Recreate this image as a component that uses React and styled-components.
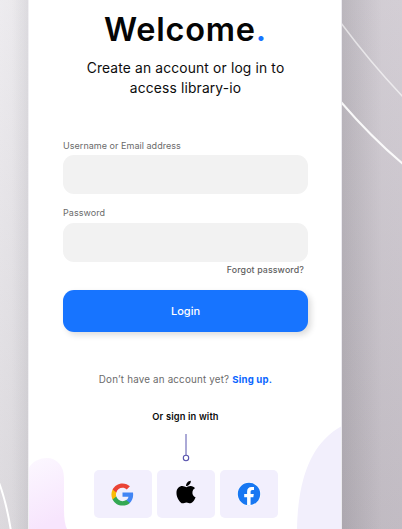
import React from "react";
import styled, { createGlobalStyle } from "styled-components";
import { FaApple } from "react-icons/fa";

const GlobalStyle = createGlobalStyle`
  *, *::before, *::after { box-sizing: border-box; }
  body { margin: 0; overflow: hidden; }
  h1, p { margin: 0; }
  button, input { font: inherit; border: 0; padding: 0; }
`;

const Page = styled.main`
  position: relative;
  width: 402px;
  height: 529px;
  padding-left: 28px;
  overflow: hidden;
  font-family: Inter, "Open Sans", sans-serif;
  background:
    linear-gradient(90deg, transparent 342px, rgba(90, 85, 95, 0.18) 342px, transparent 382px),
    linear-gradient(90deg, transparent 12px, rgba(110, 110, 120, 0.1) 28px, transparent 28px),
    linear-gradient(180deg, rgba(255, 255, 255, 0.12), rgba(110, 104, 110, 0.12)),
    linear-gradient(90deg, #ebe9ed 0, #e6e4e8 28px, #cac5cc 342px, #cdc7cf 402px);
`;

const Curves = styled.svg`
  position: absolute;
  inset: 0;
`;

const Card = styled.section`
  position: relative;
  width: 314px;
  height: 529px;
  padding: 8px 33px 0 34px;
  display: flex;
  flex-direction: column;
  overflow: hidden;
  background: #fff;
  border-left: 1px solid #f1f0f3;
  border-right: 1px solid #ecebf0;
`;

const Blobs = styled.svg`
  position: absolute;
  left: -1px;
  bottom: 0;
`;

const Content = styled.div`
  position: relative;
  display: flex;
  flex-direction: column;
`;

const Title = styled.h1`
  height: 44px;
  line-height: 44px;
  font-size: 32.5px;
  font-weight: 600;
  letter-spacing: 0.75px;
  text-align: center;
  white-space: nowrap;
  color: #050505;
  span { color: #1774ff; }
`;

const Intro = styled.p`
  margin-top: 6px;
  line-height: 20px;
  font-size: 13.8px;
  letter-spacing: 0.16px;
  text-align: center;
  white-space: nowrap;
  color: #0c0c0c;
`;

const Field = styled.label`
  display: flex;
  flex-direction: column;
  height: 56px;
  margin-top: ${({ $top }) => $top}px;
`;

const LabelText = styled.span`
  height: ${({ $h }) => $h}px;
  line-height: 14px;
  font-size: 9px;
  letter-spacing: 0.04px;
  color: #6b6b6b;
`;

const Input = styled.input`
  width: 245px;
  height: 39px;
  border-radius: 11px;
  background: #f2f2f2;
  outline: none;
`;

const Forgot = styled.a`
  align-self: flex-end;
  margin: 1px 4px 0 0;
  height: 14px;
  line-height: 14px;
  font-size: 8.8px;
  letter-spacing: 0.12px;
  font-weight: 500;
  white-space: nowrap;
  color: #5f5f5f;
`;

const LoginButton = styled.button`
  width: 245px;
  height: 42px;
  margin-top: 13px;
  border-radius: 11px;
  background: #1774ff;
  color: #fff;
  font-size: 11px;
  font-weight: 500;
  box-shadow: 3px 3px 6px rgba(0, 0, 0, 0.14);
`;

const Signup = styled.p`
  margin-top: 41px;
  height: 14px;
  line-height: 14px;
  font-size: 9.8px;
  letter-spacing: 0.19px;
  text-align: center;
  white-space: nowrap;
  color: #6b6b6b;
  a { color: #0b66ff; font-weight: 700; font-size: 9.6px; }
`;

const OrText = styled.p`
  margin-top: 23px;
  height: 14px;
  line-height: 14px;
  font-size: 9.3px;
  letter-spacing: 0.14px;
  font-weight: 600;
  text-align: center;
  color: #0a0a0a;
`;

const Pin = styled.svg`
  align-self: center;
  margin-top: 10px;
  display: block;
`;

const Providers = styled.div`
  display: grid;
  grid-template-columns: repeat(3, 58px);
  column-gap: 5px;
  justify-content: center;
  margin-top: 8px;
`;

const Provider = styled.button`
  height: 48px;
  border-radius: 5px;
  background: #f2effd;
  display: flex;
  align-items: center;
  justify-content: center;
  color: #000;
  svg { display: block; }
`;

const AppleIcon = styled(FaApple)`
  margin-bottom: 5px;
`;

function GoogleIcon() {
  return (
    <svg width="23" height="23" viewBox="0.6 0.6 22.8 22.8">
      <path fill="#4285F4" d="M22.56 12.25c0-.78-.07-1.53-.2-2.25H12v4.26h5.92c-.26 1.37-1.04 2.53-2.21 3.31v2.77h3.57c2.08-1.92 3.28-4.74 3.28-8.09z" />
      <path fill="#34A853" d="M12 23c2.97 0 5.46-.98 7.28-2.66l-3.57-2.77c-.98.66-2.23 1.06-3.71 1.06-2.86 0-5.29-1.93-6.16-4.53H2.18v2.84C3.99 20.53 7.7 23 12 23z" />
      <path fill="#FBBC05" d="M5.84 14.09c-.22-.66-.35-1.36-.35-2.09s.13-1.43.35-2.09V7.07H2.18C1.43 8.55 1 10.22 1 12s.43 3.45 1.18 4.93z" />
      <path fill="#EA4335" d="M12 5.38c1.62 0 3.06.56 4.21 1.64l3.15-3.15C17.45 2.09 14.97 1 12 1 7.7 1 3.99 3.47 2.18 7.07l3.66 2.84c.87-2.6 3.3-4.53 6.16-4.53z" />
    </svg>
  );
}

function FacebookIcon() {
  return (
    <svg width="24" height="24" viewBox="0 0 24 24">
      <circle cx="12" cy="12" r="11.8" fill="#fff" />
      <circle cx="12" cy="12" r="11.2" fill="#1877f2" />
      <path fill="#fff" d="M10.1 23.2v-8H7.2v-3.3h2.9V9.4c0-2.9 1.7-4.5 4.3-4.5 1.3 0 2.6.2 2.6.2V8h-1.5c-1.4 0-1.9.9-1.9 1.8v2.1h3.2l-.5 3.3h-2.7v8z" />
    </svg>
  );
}

export default function App() {
  return (
    <>
      <GlobalStyle />
      <Page>
        <Curves width="402" height="529" fill="none" stroke="#fff">
          <path d="M341 23Q370 62 403 97" strokeWidth="1.5" opacity=".6" />
          <path d="M341 102Q371 137 403 164" strokeWidth="2" opacity=".9" />
          <path d="M-2 480Q6 500 11 531" strokeWidth="2" />
        </Curves>
        <Card>
          <Blobs width="314" height="110" viewBox="28 419 314 110">
            <defs>
              <linearGradient id="lilac" x1="0" y1="0" x2=".25" y2="1">
                <stop stopColor="#fcf8ff" />
                <stop offset="1" stopColor="#f7e5fd" />
              </linearGradient>
            </defs>
            <path fill="url(#lilac)" d="M28 470C31 462 39 458 47 458C57 458 64 466 64 478V510Q64 523 67 529H28Z" />
            <path fill="#f2effc" d="M342 426C316 440 298 470 297 529H342Z" />
          </Blobs>
          <Content>
            <Title>Welcome<span>.</span></Title>
            <Intro>Create an account or log in to<br />access library-io</Intro>
            <Field $top={41}>
              <LabelText $h={16}>Username or Email address</LabelText>
              <Input type="text" />
            </Field>
            <Field $top={11}>
              <LabelText $h={16.5}>Password</LabelText>
              <Input type="password" />
            </Field>
            <Forgot>Forgot password?</Forgot>
            <LoginButton>Login</LoginButton>
            <Signup>Don’t have an account yet? <a>Sing up.</a></Signup>
            <OrText>Or sign in with</OrText>
            <Pin width="8" height="28" fill="none" stroke="#5954ae">
              <path d="M4 0V21" />
              <circle cx="4" cy="24" r="2.7" strokeWidth="1.1" />
            </Pin>
            <Providers>
              <Provider aria-label="Google"><GoogleIcon /></Provider>
              <Provider aria-label="Apple"><AppleIcon size={26} /></Provider>
              <Provider aria-label="Facebook"><FacebookIcon /></Provider>
            </Providers>
          </Content>
        </Card>
      </Page>
    </>
  );
}
